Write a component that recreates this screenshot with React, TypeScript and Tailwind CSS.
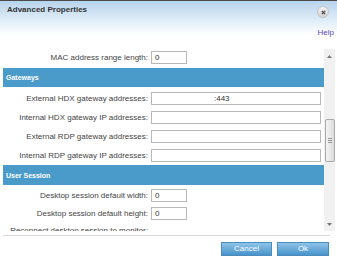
import React from 'react';

type Field = { label: string; value?: string; wide?: boolean; indent?: string; noInput?: boolean };

const gateways: Field[] = [
    { label: 'External HDX gateway addresses:', value: ':443', wide: true, indent: 'pl-[62px]' },
    { label: 'Internal HDX gateway IP addresses:', wide: true },
    { label: 'External RDP gateway addresses:', wide: true },
    { label: 'Internal RDP gateway IP addresses:', wide: true },
];

const session: Field[] = [
    { label: 'Desktop session default width:', value: '0' },
    { label: 'Desktop session default height:', value: '0' },
];

function Row({ label, value = '', wide, indent = 'pl-[3px]' }: Field) {
    return (
        <div className="flex items-center h-[13px] shrink-0">
            <span className="w-[145px] text-right text-[8px] leading-[10px] text-[#444] whitespace-nowrap">{label}</span>
            <div
                className={`ml-[3px] h-[13px] border border-[#b9b9b9] bg-white text-[8px] leading-[11px] text-[#333] ${indent} ${wide ? 'w-[170px]' : 'w-[36px]'}`}
            >
                {value}
            </div>
        </div>
    );
}

function SectionHeader({ title, height }: { title: string; height: string }) {
    return (
        <div className={`${height} shrink-0 bg-[#4a9bc9] flex items-center pl-[3px]`}>
            <span className="text-[7px] font-bold text-white leading-[9px]">{title}</span>
        </div>
    );
}

export default function App() {
    return (
        <div className="w-[337px] h-[262px] bg-white overflow-hidden border-t border-[#4d4d4d] font-['Liberation_Sans',Arial,sans-serif] text-[#333]">
            {/* Title bar */}
            <div className="h-[48px] bg-[linear-gradient(#b7d4ec,#ffffff_34px)]">
                <div className="flex items-start justify-between pl-[7px] pr-[8px] pt-[4px] h-[23px]">
                    <span className="text-[8px] font-bold leading-[10px] text-[#333]">Advanced Properties</span>
                    <div className="mt-[1px] w-[12px] h-[12px] rounded-full bg-[linear-gradient(#f2f2f2,#d2d2d2)] border border-[#c4c4c4] flex items-center justify-center">
                        <svg width="5" height="5" viewBox="0 0 5 5">
                            <path d="M0.8 0.8 L4.2 4.2 M4.2 0.8 L0.8 4.2" stroke="#444" strokeWidth="1.2" />
                        </svg>
                    </div>
                </div>
                <div className="flex justify-end pr-[3px] mt-[4px]">
                    <a className="text-[8px] leading-[10px] text-[#5b4fb4]">Help</a>
                </div>
            </div>

            {/* Scroll area */}
            <div className="flex h-[182px]">
                <div className="w-[321px] ml-[3px] overflow-hidden flex flex-col">
                    <div className="pt-[2px] pb-[4px]">
                        <Row label="MAC address range length:" value="0" />
                    </div>
                    <SectionHeader title="Gateways" height="h-[19px]" />
                    <div className="flex flex-col gap-[6px] pt-[5px] pb-[3px]">
                        {gateways.map((g) => (
                            <Row key={g.label} {...g} />
                        ))}
                    </div>
                    <SectionHeader title="User Session" height="h-[20px]" />
                    <div className="flex flex-col gap-[5px] pt-[4px]">
                        {session.map((s) => (
                            <Row key={s.label} {...s} />
                        ))}
                        <div className="flex h-[13px] shrink-0 mt-[1px]">
                            <span className="w-[145px] text-right text-[8px] leading-[10px] text-[#444] whitespace-nowrap">
                                Reconnect desktop session to monitor:
                            </span>
                        </div>
                    </div>
                </div>

                {/* Scrollbar */}
                <div className="w-[11px] bg-[#f1f1f1] flex flex-col items-center">
                    <div className="h-[14px] flex items-center justify-center">
                        <svg width="5" height="3" viewBox="0 0 5 3"><path d="M2.5 0 L5 3 L0 3 Z" fill="#777" /></svg>
                    </div>
                    <div className="h-[56px]" />
                    <div className="w-[10px] h-[43px] rounded-[2px] border border-[#a9a9a9] bg-[linear-gradient(90deg,#f4f4f4,#dcdcdc)] flex flex-col items-center justify-center gap-[1px]">
                        <div className="w-[4px] h-px bg-[#999]" />
                        <div className="w-[4px] h-px bg-[#999]" />
                        <div className="w-[4px] h-px bg-[#999]" />
                    </div>
                    <div className="flex-1" />
                    <div className="h-[14px] flex items-center justify-center">
                        <svg width="5" height="3" viewBox="0 0 5 3"><path d="M0 0 L5 0 L2.5 3 Z" fill="#777" /></svg>
                    </div>
                </div>
            </div>

            {/* Footer */}
            <div className="mt-[4px] ml-[3px] w-[327px] h-px bg-[#d9d9d9]" />
            <div className="flex justify-end gap-[5px] pr-[8px] mt-[6px]">
                <button className="w-[51px] h-[14px] border border-[#4a8cbd] bg-[linear-gradient(#8fc4e8,#4793ca)] text-white text-[8px] leading-[12px]">
                    Cancel
                </button>
                <button className="w-[52px] h-[14px] border border-[#4a8cbd] bg-[linear-gradient(#8fc4e8,#4793ca)] text-white text-[8px] leading-[12px]">
                    Ok
                </button>
            </div>
        </div>
    );
}
